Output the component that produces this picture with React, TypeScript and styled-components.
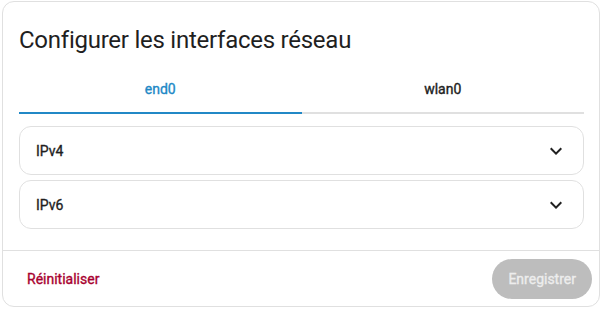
import React, { FC, useState } from "react";
import styled, { createGlobalStyle, css } from "styled-components";

const GlobalStyle = createGlobalStyle`
  html, body {
    margin: 0;
    padding: 0;
    background: #ffffff;
  }
  body {
    font-family: Roboto, "Noto Sans", "Liberation Sans", sans-serif;
    -webkit-font-smoothing: antialiased;
  }
`;

// no 500 weight installed, so thicken the regular face a little
const medium = css`
  font-family: Roboto, "Noto Sans", sans-serif;
  font-size: 14px;
  font-weight: 400;
  -webkit-text-stroke: 0.35px currentColor;
`;

const Page = styled.div`
  padding: 1px 3px 2px 2px;
`;

const Dialog = styled.div`
  box-sizing: border-box;
  width: 598px;
  height: 306px;
  border: 1px solid #e0e0e0;
  border-radius: 12px;
  background: #ffffff;
  display: flex;
  flex-direction: column;
  overflow: hidden;
`;

const Content = styled.div`
  flex: 1;
  padding: 22px 15px 0 16px;
  display: flex;
  flex-direction: column;
`;

const Title = styled.h2`
  margin: 0;
  font-size: 24px;
  line-height: 32px;
  font-weight: 400;
  letter-spacing: -0.25px;
  color: #1f1f1f;
`;

const TabBar = styled.div`
  margin-top: 10px;
  display: flex;
  border-bottom: 2px solid #e0e0e0;
`;

const Tab = styled.button<{ $active?: boolean }>`
  flex: 1;
  height: 48px;
  margin-bottom: -2px;
  border: none;
  border-bottom: 2px solid ${(p) => (p.$active ? "#2188c6" : "transparent")};
  background: none;
  ${medium}
  color: ${(p) => (p.$active ? "#2188c6" : "#212121")};
  cursor: pointer;
  padding: 0;
`;

const Panels = styled.div`
  margin-top: 12px;
  display: flex;
  flex-direction: column;
  gap: 5px;
`;

const Panel = styled.div`
  box-sizing: border-box;
  height: 49px;
  border: 1px solid #e0e0e0;
  border-radius: 12px;
  display: flex;
  align-items: center;
  justify-content: space-between;
  padding: 0 16px;
`;

const PanelTitle = styled.span`
  ${medium}
  color: #1f1f1f;
`;

const Chevron = styled.svg`
  width: 24px;
  height: 24px;
  fill: #212121;
  margin-right: -1px;
`;

const Footer = styled.div`
  height: 55px;
  border-top: 1px solid #e0e0e0;
  display: flex;
  align-items: center;
  justify-content: space-between;
  padding: 0 7px 0 16px;
`;

const TextButton = styled.button`
  border: none;
  background: none;
  padding: 0 8px;
  height: 40px;
  ${medium}
  color: #a8002f;
  cursor: pointer;
`;

const FilledButton = styled.button`
  border: none;
  height: 40px;
  padding: 0 16px;
  border-radius: 20px;
  background: #bdbdbd;
  ${medium}
  color: #ededed;
  margin-top: 1px;
`;

const ChevronDown: FC = () => (
  <Chevron viewBox="0 0 24 24">
    <path d="M7.41,8.58L12,13.17L16.59,8.58L18,10L12,16L6,10L7.41,8.58Z" />
  </Chevron>
);

const interfaces = ["end0", "wlan0"];
const sections = ["IPv4", "IPv6"];

export default function App() {
  const [active, setActive] = useState("end0");
  return (
    <Page>
      <GlobalStyle />
      <Dialog>
        <Content>
          <Title>Configurer les interfaces réseau</Title>
          <TabBar>
            {interfaces.map((name) => (
              <Tab key={name} $active={name === active} onClick={() => setActive(name)}>
                {name}
              </Tab>
            ))}
          </TabBar>
          <Panels>
            {sections.map((s) => (
              <Panel key={s}>
                <PanelTitle>{s}</PanelTitle>
                <ChevronDown />
              </Panel>
            ))}
          </Panels>
        </Content>
        <Footer>
          <TextButton>Réinitialiser</TextButton>
          <FilledButton disabled>Enregistrer</FilledButton>
        </Footer>
      </Dialog>
    </Page>
  );
}
